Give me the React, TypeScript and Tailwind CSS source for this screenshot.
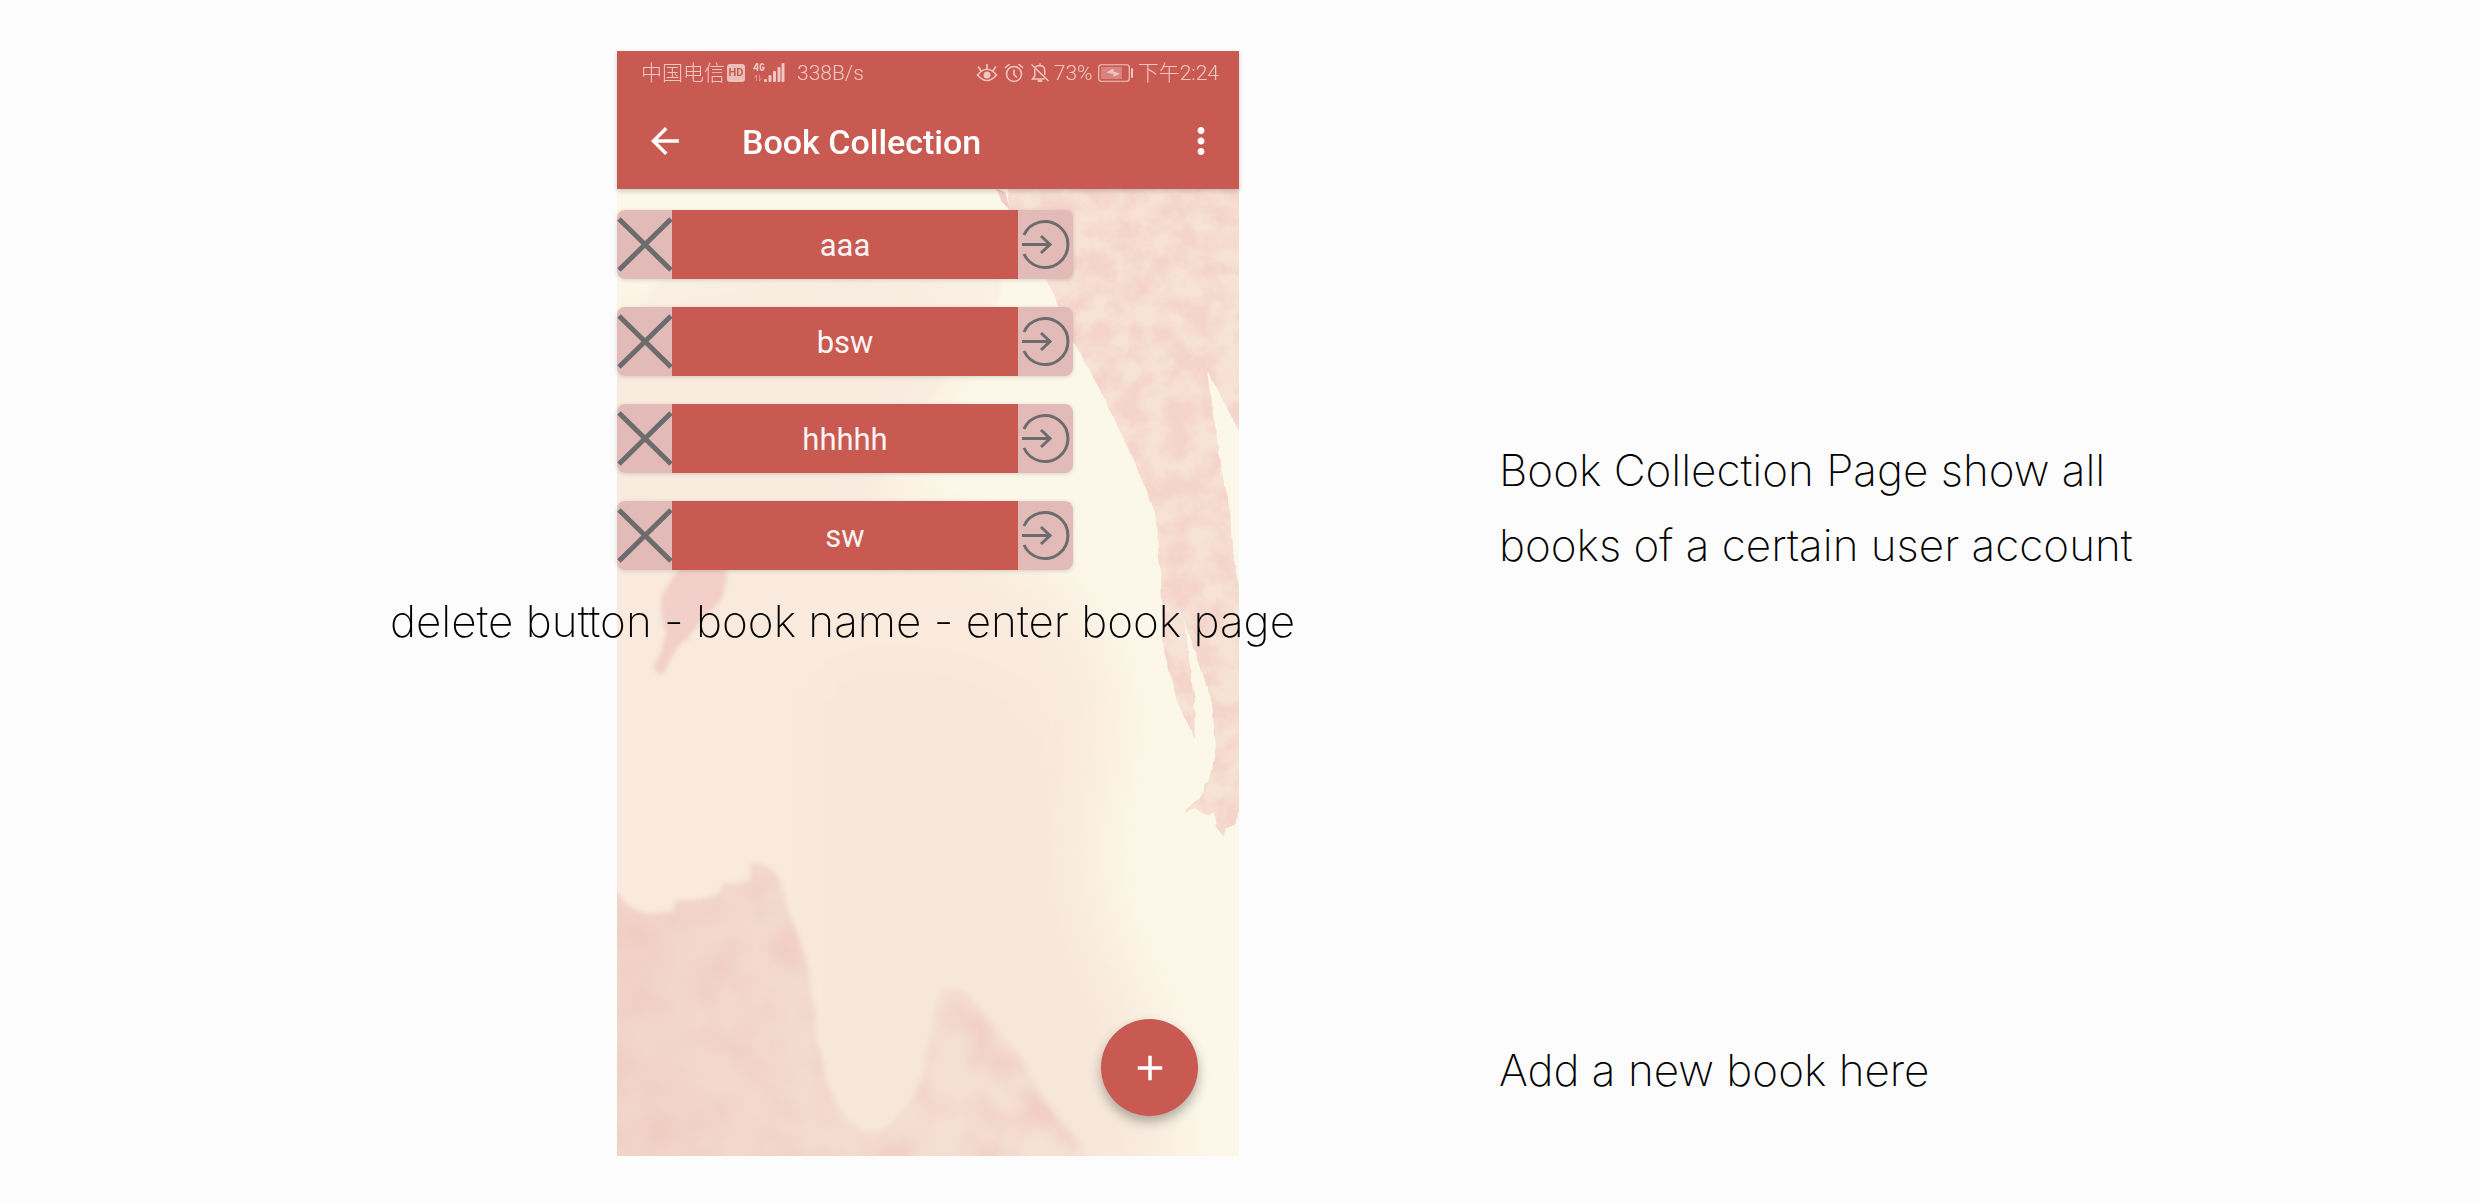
import React from "react";
import { MdAdd, MdArrowBack, MdMoreVert } from "react-icons/md";

const books = ["aaa", "bsw", "hhhhh", "sw"];

const noteText =
  "font-['Inter','Lato',sans-serif] font-extralight text-[44px] leading-[75px] text-black whitespace-nowrap";

function Watercolor() {
  return (
    <svg
      className="absolute inset-0 h-full w-full"
      viewBox="0 0 622 1105"
      preserveAspectRatio="none"
      aria-hidden="true"
    >
      <defs>
        <filter id="soft" x="-20%" y="-20%" width="140%" height="140%">
          <feGaussianBlur stdDeviation="30" />
        </filter>
        <filter id="edge" x="-5%" y="-5%" width="110%" height="110%">
          <feTurbulence type="fractalNoise" baseFrequency="0.08" numOctaves="2" seed="4" result="n" />
          <feDisplacementMap in="SourceGraphic" in2="n" scale="5" result="d" />
          <feGaussianBlur in="d" stdDeviation="0.6" />
        </filter>
        <filter id="wash" x="-5%" y="-5%" width="110%" height="110%">
          <feTurbulence type="fractalNoise" baseFrequency="0.02" numOctaves="2" seed="8" result="n" />
          <feDisplacementMap in="SourceGraphic" in2="n" scale="12" result="d" />
          <feGaussianBlur in="d" stdDeviation="2" />
        </filter>
        <filter id="grain" x="0" y="0" width="100%" height="100%" colorInterpolationFilters="sRGB">
          <feTurbulence type="fractalNoise" baseFrequency="0.04" numOctaves="4" seed="11" result="n" />
          <feColorMatrix
            in="n"
            type="matrix"
            values="0 0 0 0 0.98  0 0 0 0 0.93  0 0 0 0 0.87  2.4 0 0 0 -0.7"
            result="c"
          />
          <feComposite in="c" in2="SourceGraphic" operator="in" />
        </filter>
        <filter id="blotch" x="0" y="0" width="100%" height="100%" colorInterpolationFilters="sRGB">
          <feTurbulence type="fractalNoise" baseFrequency="0.02" numOctaves="3" seed="3" result="n" />
          <feColorMatrix
            in="n"
            type="matrix"
            values="0 0 0 0 0.94  0 0 0 0 0.79  0 0 0 0 0.75  2.6 0 0 0 -1.1"
            result="c"
          />
          <feComposite in="c" in2="SourceGraphic" operator="in" result="m" />
          <feGaussianBlur in="m" stdDeviation="3" />
        </filter>
        <linearGradient id="lower" x1="0" y1="0" x2="1" y2="0">
          <stop offset="0" stopColor="#f2d4ca" />
          <stop offset="0.3" stopColor="#f3d9ce" />
          <stop offset="1" stopColor="#f6e3d7" />
        </linearGradient>
        <path
          id="brush"
          d="M390 136 L392 158 L431 231 L459 294 L491 354 L520 417 L538 461 L544 527 L547 600 L560 650 L578 688 L577 650 L571 600 L568 570 L586 624 L595 652 L599 696 L592 729 L580 749 L566 761 L578 757 L586 763 L597 762 L599 776 L606 785 L617 772 L624 760 L624 540 L615 501 L613 457 L605 427 L597 367 L591 320 L624 384 L624 136 Z"
        />
        <path
          id="hills"
          d="M-5 835 Q8 855 20 859 L58 862 L60 852 Q88 852 102 839 L104 830 Q125 832 131 826 L133 811 Q160 812 166 840 L175 869 L192 919 L198 969 L208 1026 Q228 1081 256 1081 Q285 1078 305 1026 L317 969 L323 936 Q352 936 366 962 L398 999 L426 1049 L463 1092 L480 1112 L-5 1112 Z"
        />
      </defs>
      <rect width="622" height="1105" fill="#fcf8e9" />
      <g filter="url(#soft)">
        <path
          d="M-60 290 Q150 210 340 240 Q350 330 290 370 Q270 430 240 440 Q380 470 460 560 Q520 640 490 740 Q460 830 520 930 Q555 980 560 1180 L-60 1180 Z"
          fill="#f9eadd"
        />
        <path d="M200 620 Q440 580 450 760 Q440 900 520 1000 L520 1180 L200 1180 Z" fill="#f6e5d9" opacity="0.7" />
      </g>
      <g filter="url(#wash)">
        <path
          d="M42 230 Q200 190 382 225 Q385 245 370 262 L330 300 Q320 355 290 362 L270 372 Q275 420 240 460 Q100 480 0 440 L0 290 Z"
          fill="#f9ebdf"
          opacity="0.6"
        />
        <use href="#hills" fill="url(#lower)" />
        <path
          d="M58 500 L58 517 L44 541 L46 567 L50 584 L40 618 Q43 630 50 620 L56 603 L82 576 L106 546 L110 515 L104 500 Z"
          fill="#f2cfc8"
        />
      </g>
      <use href="#hills" filter="url(#blotch)" opacity="0.8" />
      <g filter="url(#edge)">
        <use href="#brush" fill="#f4d4cb" />
        <path d="M379 138 L384 150 L394 160 L387 140 Z" fill="#f2cdc6" />
      </g>
      <use href="#brush" filter="url(#grain)" opacity="0.6" />
    </svg>
  );
}

function Signal() {
  return (
    <svg viewBox="0 0 32 20" className="h-5 w-8" fill="currentColor" aria-hidden="true">
      <path d="M4 0 L1 5.500 H5.500 M4.500 0 V8" fill="none" stroke="currentColor" strokeWidth="1.500" />
      <path d="M11 2 Q10.500 0.800 9 .8 Q7.300 .8 7.300 4 Q7.300 7.200 9 7.200 Q10.800 7.200 10.800 4.500 H9" fill="none" stroke="currentColor" strokeWidth="1.500" />
      <path d="M3.500 18 V12 L1.500 15 M6.500 12 V18 L8.500 15" fill="none" stroke="currentColor" strokeWidth="1" opacity="0.5" />
      <rect x="11" y="16" width="3" height="3" rx="1" />
      <rect x="15.500" y="12" width="3" height="7" rx="1" />
      <rect x="20" y="8" width="3" height="11" rx="1" />
      <rect x="24.500" y="4" width="3" height="15" rx="1" />
      <rect x="28.500" y="0" width="3" height="19" rx="1" />
    </svg>
  );
}

function Eye() {
  return (
    <svg viewBox="0 0 22 20" className="h-5 w-[22px]" fill="none" stroke="currentColor" strokeWidth="1.600" strokeLinecap="round" aria-hidden="true">
      <path d="M1.500 12 Q11 0.500 20.500 12 Q11 23 1.500 12 Z" />
      <circle cx="11" cy="12" r="3.500" fill="currentColor" stroke="none" />
      <path d="M11 6 V1.500 M5 8 L2.500 4 M17 8 L19.500 4" />
    </svg>
  );
}

function Alarm() {
  return (
    <svg viewBox="0 0 20 20" className="h-5 w-5" fill="none" stroke="currentColor" strokeWidth="1.600" strokeLinecap="round" aria-hidden="true">
      <circle cx="10" cy="11" r="7.500" />
      <path d="M10 7 V11.500 L12.500 14 M1.500 4.500 L5 1.500 M18.500 4.500 L15 1.500" />
    </svg>
  );
}

function BellOff() {
  return (
    <svg viewBox="0 0 20 20" className="h-5 w-5" fill="none" stroke="currentColor" strokeWidth="1.500" strokeLinecap="round" aria-hidden="true">
      <path d="M6 3.800 Q7.500 2.500 10 2.500 Q14.800 2.800 14.800 8 V11.500 M10 2.500 V1 M4.800 6.500 V13 L2.500 16 H14" />
      <path d="M2 2 L18 17.500" />
      <path d="M8.500 18 H11.500" strokeWidth="2" />
    </svg>
  );
}

function Battery() {
  return (
    <svg viewBox="0 0 36 18" className="h-[18px] w-9" aria-hidden="true">
      <rect x="0.750" y="0.750" width="30.500" height="16.500" rx="2.500" fill="none" stroke="currentColor" strokeWidth="1.200" />
      <rect x="3" y="3" width="21" height="12" fill="currentColor" opacity="0.4" />
      <path d="M8.500 8.500 L15.500 4.500 V7.500 L22 9.500 L15.500 13 V10 Z" fill="currentColor" />
      <rect x="33" y="4" width="2" height="10" rx="1" fill="currentColor" />
    </svg>
  );
}

function StatusBar() {
  return (
    <div className="flex h-11 items-center justify-between pl-6 pr-5 font-['Roboto','Noto_Sans_CJK_SC',sans-serif] text-[21px] font-light leading-6 text-[#f0c6c2]">
      <div className="flex items-center">
        <span>中国电信</span>
        <span className="ml-[2px] flex h-[18px] w-[18px] items-center justify-center rounded-[3px] bg-[#ecbfbb] text-[11px] font-bold text-[#c95a51]">
          HD
        </span>
        <span className="ml-2">
          <Signal />
        </span>
        <span className="ml-3">338B/s</span>
      </div>
      <div className="flex items-center">
        <Eye />
        <span className="ml-[6px]">
          <Alarm />
        </span>
        <span className="ml-[6px]">
          <BellOff />
        </span>
        <span className="ml-1">73%</span>
        <span className="ml-[5px]">
          <Battery />
        </span>
        <span className="ml-1">下午2:24</span>
      </div>
    </div>
  );
}

function BookRow({ name }: { name: string }) {
  return (
    <li className="flex h-[69px] w-[456px] overflow-hidden rounded-lg shadow-[0_1px_4px_rgba(0,0,0,0.15)]">
      <button aria-label={`Delete ${name}`} className="w-[55px] shrink-0 bg-[#e2bbb8]">
        <svg viewBox="0 0 55 69" className="h-full w-full" stroke="#6c6c6c" strokeWidth="5" aria-hidden="true">
          <path d="M2 9 L54 60 M54 9 L2 60" />
        </svg>
      </button>
      <div className="flex flex-1 items-center justify-center bg-[#c95a51] pt-[2px] font-['Roboto',sans-serif] text-[31px] leading-9 text-[#f9f4f4]">
        {name}
      </div>
      <button aria-label={`Open ${name}`} className="w-[55px] shrink-0 bg-[#e2bbb8]">
        <svg viewBox="0 0 55 69" className="h-full w-full" fill="none" stroke="#6c6c6c" strokeWidth="3" aria-hidden="true">
          <path d="M6 25 A23 23 0 1 1 6 44 M4 34.500 H33 M23 26 L32 34.500 L23 43" />
        </svg>
      </button>
    </li>
  );
}

export default function App() {
  return (
    <main className="grid min-h-screen grid-cols-[617fr_622fr_260fr_981fr] items-start overflow-hidden bg-[#fcfcfc] pt-[51px] pb-[47px]">
      <section className="relative col-start-2 flex aspect-[622/1105] flex-col">
        <Watercolor />
        <header className="relative bg-[#c95a51] pb-[2px] text-white shadow-[0_2px_5px_rgba(0,0,0,0.2)]">
          <StatusBar />
          <div className="flex h-[92px] items-center pl-[27px] pr-[17px]">
            <button aria-label="Back">
              <MdArrowBack size={42} />
            </button>
            <h1 className="ml-14 flex-1 pt-[2px] font-['Roboto',sans-serif] text-[34px] font-medium leading-10">
              Book Collection
            </h1>
            <button aria-label="More options">
              <MdMoreVert size={42} />
            </button>
          </div>
        </header>
        <ul className="relative mt-[21px] flex flex-col gap-7">
          {books.map((b) => (
            <BookRow key={b} name={b} />
          ))}
        </ul>
        <div className="relative">
          <p className={`absolute top-[14px] right-[-56px] ${noteText}`}>
            delete button - book name - enter book page
          </p>
        </div>
        <button
          aria-label="Add a new book"
          className="relative mt-auto mr-[41px] mb-10 flex h-[97px] w-[97px] items-center justify-center self-end rounded-full bg-[#c95a51] text-white shadow-[0_6px_12px_rgba(0,0,0,0.3)]"
        >
          <MdAdd size={42} />
        </button>
      </section>
      <aside className="col-start-4 flex h-full flex-col justify-between pt-[382px] pb-[48px]">
        <p className={noteText}>
          Book Collection Page show all
          <br />
          books of a certain user account
        </p>
        <p className={noteText}>Add a new book here</p>
      </aside>
    </main>
  );
}
